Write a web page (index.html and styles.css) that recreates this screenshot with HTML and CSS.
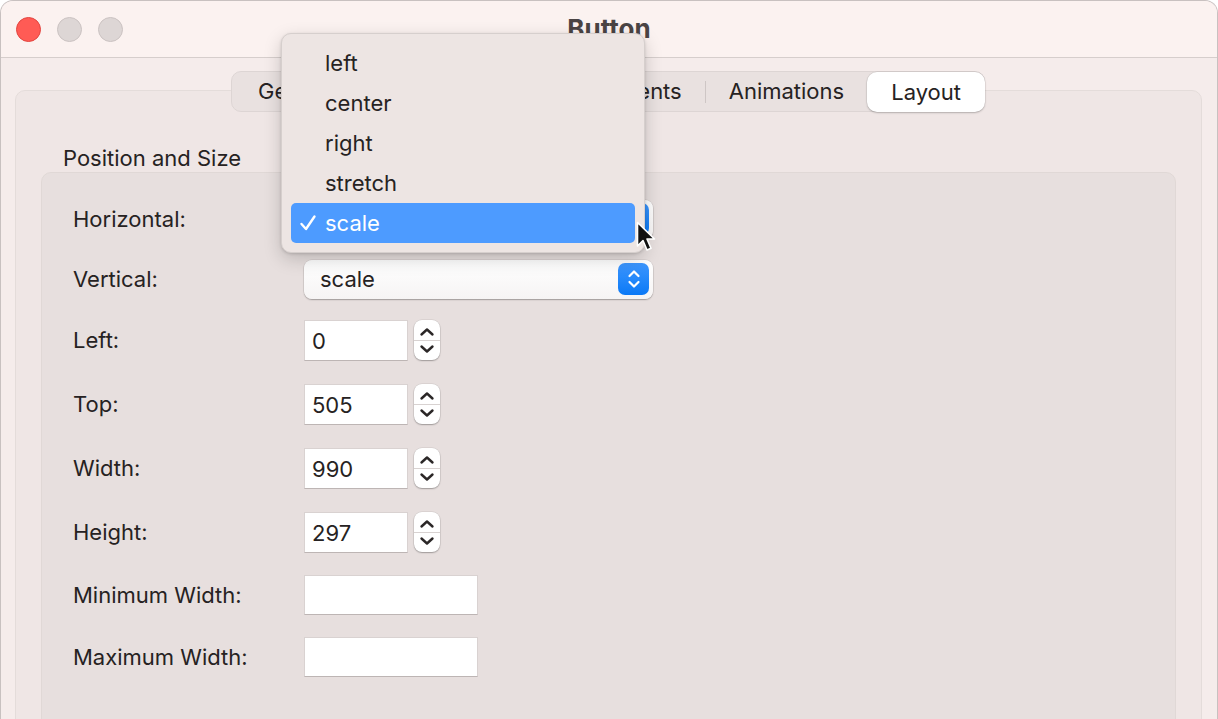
FILE: index.html
```html
<!DOCTYPE html>
<html lang="en">
    <head>
        <title>Button</title>
        <meta charset="UTF-8">
        <link rel="stylesheet" href="styles.css">
    </head>
    <body>
        <div class="window">
            <header class="titlebar">
                <div class="lights">
                    <span class="light close"></span>
                    <span class="light"></span>
                    <span class="light"></span>
                </div>
                <div class="title">Button</div>
                <div></div>
            </header>

            <main class="content">
                <nav class="tabs">
                    <span class="tab first">General</span>
                    <span class="sep"></span>
                    <span class="tab grow">Appearance</span>
                    <span class="sep"></span>
                    <span class="tab">Events</span>
                    <span class="sep"></span>
                    <span class="tab">Animations</span>
                    <span class="tab selected">Layout</span>
                </nav>

                <section class="tabbox">
                    <div class="group-title">Position and Size</div>
                    <div class="group">
                        <div class="row popup-row">
                            <span class="label">Horizontal:</span>
                            <div class="popup">
                                <span>scale</span>
                                <span class="popup-arrows">
                                    <svg width="14" height="24" viewBox="0 0 14 24"><path d="M2.5 9 L7 4.5 L11.5 9 M2.5 15 L7 19.5 L11.5 15" fill="none" stroke="#fff" stroke-width="2.2" stroke-linecap="round" stroke-linejoin="round"/></svg>
                                </span>
                            </div>
                        </div>
                        <div class="row popup-row">
                            <span class="label">Vertical:</span>
                            <div class="popup">
                                <span>scale</span>
                                <span class="popup-arrows">
                                    <svg width="14" height="24" viewBox="0 0 14 24"><path d="M2.5 9 L7 4.5 L11.5 9 M2.5 15 L7 19.5 L11.5 15" fill="none" stroke="#fff" stroke-width="2.2" stroke-linecap="round" stroke-linejoin="round"/></svg>
                                </span>
                            </div>
                        </div>
                        <div class="row num-row">
                            <span class="label">Left:</span>
                            <div class="field num">0</div>
                            <div class="stepper">
                                <svg width="16" height="10" viewBox="0 0 16 10"><path d="M2.5 7.5 L8 2.5 L13.5 7.5" fill="none" stroke="#2b2727" stroke-width="2.4" stroke-linecap="round" stroke-linejoin="round"/></svg>
                                <span class="stepper-line"></span>
                                <svg width="16" height="10" viewBox="0 0 16 10"><path d="M2.5 2.5 L8 7.5 L13.5 2.5" fill="none" stroke="#2b2727" stroke-width="2.4" stroke-linecap="round" stroke-linejoin="round"/></svg>
                            </div>
                        </div>
                        <div class="row num-row">
                            <span class="label">Top:</span>
                            <div class="field num">505</div>
                            <div class="stepper">
                                <svg width="16" height="10" viewBox="0 0 16 10"><path d="M2.5 7.5 L8 2.5 L13.5 7.5" fill="none" stroke="#2b2727" stroke-width="2.4" stroke-linecap="round" stroke-linejoin="round"/></svg>
                                <span class="stepper-line"></span>
                                <svg width="16" height="10" viewBox="0 0 16 10"><path d="M2.5 2.5 L8 7.5 L13.5 2.5" fill="none" stroke="#2b2727" stroke-width="2.4" stroke-linecap="round" stroke-linejoin="round"/></svg>
                            </div>
                        </div>
                        <div class="row num-row">
                            <span class="label">Width:</span>
                            <div class="field num">990</div>
                            <div class="stepper">
                                <svg width="16" height="10" viewBox="0 0 16 10"><path d="M2.5 7.5 L8 2.5 L13.5 7.5" fill="none" stroke="#2b2727" stroke-width="2.4" stroke-linecap="round" stroke-linejoin="round"/></svg>
                                <span class="stepper-line"></span>
                                <svg width="16" height="10" viewBox="0 0 16 10"><path d="M2.5 2.5 L8 7.5 L13.5 2.5" fill="none" stroke="#2b2727" stroke-width="2.4" stroke-linecap="round" stroke-linejoin="round"/></svg>
                            </div>
                        </div>
                        <div class="row num-row">
                            <span class="label">Height:</span>
                            <div class="field num">297</div>
                            <div class="stepper">
                                <svg width="16" height="10" viewBox="0 0 16 10"><path d="M2.5 7.5 L8 2.5 L13.5 7.5" fill="none" stroke="#2b2727" stroke-width="2.4" stroke-linecap="round" stroke-linejoin="round"/></svg>
                                <span class="stepper-line"></span>
                                <svg width="16" height="10" viewBox="0 0 16 10"><path d="M2.5 2.5 L8 7.5 L13.5 2.5" fill="none" stroke="#2b2727" stroke-width="2.4" stroke-linecap="round" stroke-linejoin="round"/></svg>
                            </div>
                        </div>
                        <div class="row text-row">
                            <span class="label">Minimum Width:</span>
                            <div class="field wide"></div>
                        </div>
                        <div class="row text-row">
                            <span class="label">Maximum Width:</span>
                            <div class="field wide"></div>
                        </div>
                    </div>
                </section>
            </main>

            <!-- open popup menu for Horizontal -->
            <div class="menu">
                <div class="menu-item">left</div>
                <div class="menu-item">center</div>
                <div class="menu-item">right</div>
                <div class="menu-item">stretch</div>
                <div class="menu-item checked">
                    <svg class="check" width="18" height="18" viewBox="0 0 18 18"><path d="M2.5 10 L7 15 L15.5 2.5" fill="none" stroke="#fff" stroke-width="2.4" stroke-linecap="round" stroke-linejoin="round"/></svg>
                    scale
                </div>
            </div>

            <svg class="cursor" width="22" height="34" viewBox="0 0 22 34">
                <path d="M1.5 1.5 L1.5 25 L7 19.5 L11 29 L15 27.3 L11 18 L18.5 18 Z" fill="#111" stroke="#fff" stroke-width="1.6" stroke-linejoin="round"/>
            </svg>
        </div>
    </body>
</html>
```

FILE: styles.css
```css
body {
    margin: 0;
    background-color: #ffffff;
    overflow: hidden;
    font-family: "Inter", "Liberation Sans", sans-serif;
    font-size: 22px;
    color: #262222;
}
.window {
    position: relative;
    height: 760px;
    border: 1px solid #c8c1c0;
    border-bottom: 0;
    border-radius: 13px 13px 0 0;
    overflow: hidden;
    background-color: #f5eceb;
}

/* title bar */
.titlebar {
    display: grid;
    grid-template-columns: 1fr auto 1fr;
    align-items: center;
    height: 56px;
    background-color: #fbf2f0;
    border-bottom: 1px solid #d6cecc;
}
.lights {
    display: flex;
    gap: 16px;
    padding-left: 15px;
}
.light {
    width: 23px;
    height: 23px;
    border-radius: 50%;
    background-color: #ddd6d5;
    border: 1px solid #cbc3c2;
}
.light.close {
    background-color: #ff5b55;
    border-color: #e3453f;
}
.title {
    font-size: 26px;
    font-weight: 700;
    color: #4a4444;
    margin-top: -2px;
}

/* tabs */
.content {
    padding-top: 13px;
}
.tabs {
    position: relative;
    z-index: 1;
    display: flex;
    align-items: center;
    box-sizing: border-box;
    width: 754px;
    height: 41px;
    margin: 0 auto;
    background-color: #e9e1e0;
    border: 1px solid #ddd5d4;
    border-radius: 10px;
    transform: translateX(-1px);
}
.tab {
    padding: 0 23px;
    line-height: 39px;
}
.tab.first {
    padding: 0 26px;
}
.tab.grow {
    flex: 1;
    text-align: center;
}
.sep {
    width: 1px;
    height: 22px;
    background-color: #cec6c5;
}
.tab.selected {
    height: 40px;
    line-height: 40px;
    background-color: #ffffff;
    border-radius: 10px;
    margin-right: -1px;
    padding: 0 24px;
    box-shadow: 0 1px 2px rgba(0, 0, 0, 0.22), 0 0 0 0.5px rgba(0, 0, 0, 0.08);
}

.tabbox {
    margin: -22px 15px 0 14px;
    padding: 0 25px;
    height: 700px;
    background-color: #efe6e5;
    border: 1px solid #e4dcda;
    border-radius: 10px;
}
.group-title {
    padding: 44px 0 0 22px;
    height: 37px;
    line-height: 47px;
}
.group {
    height: 600px;
    padding: 26px 0 0 31px;
    background-color: #e7dfde;
    border: 1px solid #e0d8d6;
    border-radius: 10px;
}

/* rows */
.row {
    display: flex;
    align-items: center;
    margin-bottom: 22px;
}
.popup-row {
    height: 40px;
    margin-bottom: 20px;
}
.num-row {
    height: 42px;
}
.text-row {
    height: 40px;
}
.label {
    width: 231px;
}
.popup {
    display: flex;
    align-items: center;
    justify-content: space-between;
    box-sizing: border-box;
    width: 349px;
    height: 39px;
    padding: 0 4px 0 16px;
    background: linear-gradient(180deg, #ffffff, #f6f4f4);
    border-radius: 8px;
    box-shadow: 0 1px 1.5px rgba(0, 0, 0, 0.28), 0 0 0 0.5px rgba(0, 0, 0, 0.1);
}
.popup-arrows {
    display: flex;
    align-items: center;
    justify-content: center;
    width: 31px;
    height: 32px;
    border-radius: 7px;
    background: linear-gradient(180deg, #3d97ff, #0b79f6);
}
.field {
    box-sizing: border-box;
    height: 41px;
    padding-left: 7px;
    line-height: 41px;
    background-color: #ffffff;
    border: 1px solid #d9d2d1;
    border-bottom-color: #bdb5b4;
}
.field.num {
    width: 104px;
}
.field.wide {
    width: 174px;
    height: 40px;
}
.stepper {
    display: flex;
    flex-direction: column;
    align-items: center;
    justify-content: center;
    gap: 3px;
    width: 26px;
    height: 40px;
    margin-left: 6px;
    background-color: #ffffff;
    border-radius: 8px;
    box-shadow: 0 1px 1.5px rgba(0, 0, 0, 0.28), 0 0 0 0.5px rgba(0, 0, 0, 0.1);
}
.stepper-line {
    width: 26px;
    height: 1px;
    background-color: #d8d2d1;
}

/* popup menu */
.menu {
    position: absolute;
    z-index: 5;
    left: 280px;
    top: 32px;
    width: 364px;
    padding: 9px 0;
    background-color: #ede5e3;
    border: 1px solid #d6cfcd;
    border-radius: 10px;
    box-shadow: 0 6px 18px rgba(0, 0, 0, 0.18), 0 1px 3px rgba(0, 0, 0, 0.15);
    box-sizing: border-box;
}
.menu-item {
    position: relative;
    height: 40px;
    line-height: 40px;
    margin: 0 9px;
    padding-left: 34px;
    border-radius: 5px;
}
.menu-item.checked {
    background-color: #4d9bff;
    color: #ffffff;
}
.check {
    position: absolute;
    left: 8px;
    top: 11px;
}
.cursor {
    position: absolute;
    z-index: 6;
    left: 635px;
    top: 220px;
}
```
